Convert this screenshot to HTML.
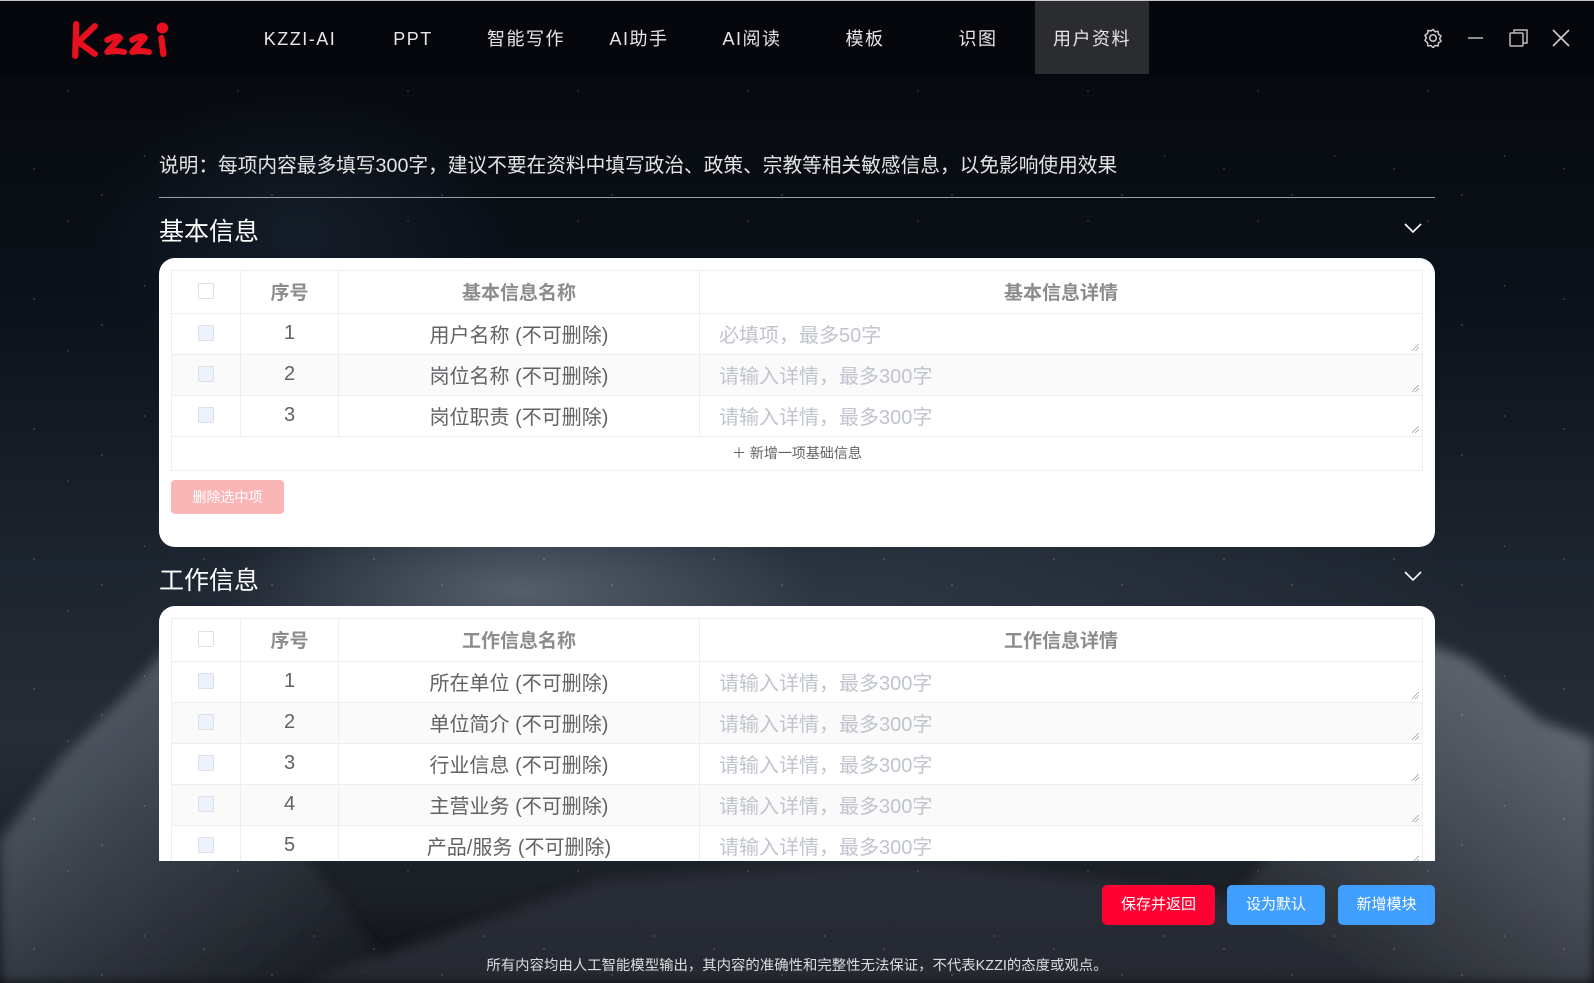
<!DOCTYPE html>
<html><head><meta charset="utf-8">
<style>
*{margin:0;padding:0;box-sizing:border-box}
html,body{width:1594px;height:983px;overflow:hidden}
body{position:relative;font-family:"Liberation Sans","Noto Sans CJK SC",sans-serif;
background:
radial-gradient(ellipse 420px 140px at 520px 590px,rgba(130,140,155,.5),transparent 70%),
radial-gradient(ellipse 300px 200px at 300px 230px,rgba(40,55,75,.35),transparent 70%),
radial-gradient(ellipse 900px 300px at 800px 620px,rgba(60,70,85,.55),transparent 75%),
linear-gradient(180deg,#05070c 0%,#0b1119 30%,#1d2530 58%,#262c35 75%,#1a1e25 92%,#0c0e12 100%);}
.stars{position:absolute;inset:0;pointer-events:none;
background-image:radial-gradient(1px 1px at 20% 30%,#fff8,transparent),radial-gradient(1px 1px at 60% 50%,#fff8,transparent),radial-gradient(1px 1px at 85% 20%,#fff6,transparent),radial-gradient(1px 1px at 40% 70%,#fff6,transparent);
background-size:170px 130px}
.top{position:absolute;left:0;top:0;width:1594px;height:75px;background:#05070c;border-top:1px solid #c8c8c8}
.nav{position:absolute;top:2px;height:75px;line-height:75px;color:#e6e6e6;font-size:18px;letter-spacing:1.5px;transform:translateX(-50%);white-space:nowrap}
.active{position:absolute;left:1035px;top:1px;width:114px;height:73px;background:#2b2c30}
.note{position:absolute;left:159px;top:149px;color:#e4e4e4;font-size:19.7px;white-space:nowrap}
.hr{position:absolute;left:159px;top:197px;width:1276px;height:1px;background:#9aa0a8}
.sec{position:absolute;left:159px;color:#fff;font-size:25px}
.chev{position:absolute;left:1404px;width:18px;height:12px}
.card{position:absolute;left:159px;width:1276px;background:#fff;border-radius:16px;overflow:hidden}
table{position:absolute;left:12px;border-collapse:collapse;width:1252px;table-layout:fixed}
td,th{border:1px solid #ebeef5;text-align:center;height:41px;color:#606266;font-size:20px;font-weight:normal;padding-bottom:2px}
th{height:43px;color:#8c8c8c;font-weight:bold;font-size:19px}
tr.s td{background:#fafafa}
td.d{text-align:left;padding-left:19px;color:#c0c4cc;position:relative}
td.d:after{content:"";position:absolute;right:3px;bottom:3px;width:7px;height:7px;background:linear-gradient(135deg,transparent 45%,#999 46%,#999 52%,transparent 53%,transparent 70%,#999 71%,#999 77%,transparent 78%)}
.cb{display:inline-block;width:16px;height:16px;border:1px solid #dcdfe6;border-radius:2px;background:#edf2fc;vertical-align:middle}
th .cb{background:#fff}
.add td{height:34px;font-size:14px;color:#606266}
.btn{position:absolute;top:885px;height:40px;line-height:40px;color:#fff;font-size:15px;text-align:center;border-radius:5px}
.foot{position:absolute;left:0;width:1594px;top:954px;text-align:center;color:#ddd;font-size:14.4px}
</style></head><body>
<svg style="position:absolute;left:0;top:0" width="1594" height="983">
<defs>
<linearGradient id="ml" x1="0" y1="0" x2="1" y2="1"><stop offset="0" stop-color="#6b7480"/><stop offset=".5" stop-color="#3a414b"/><stop offset="1" stop-color="#15181d"/></linearGradient>
<linearGradient id="mr" x1="1" y1="0" x2="0" y2="1"><stop offset="0" stop-color="#7a818b"/><stop offset=".5" stop-color="#444a53"/><stop offset="1" stop-color="#16191e"/></linearGradient>
<filter id="b"><feGaussianBlur stdDeviation="6"/></filter>
</defs>
<g filter="url(#b)" opacity=".85">
<path d="M0 840 L60 760 L120 700 L165 650 L200 700 L260 800 L340 900 L400 983 L0 983Z" fill="url(#ml)"/>
<path d="M1380 720 L1420 640 L1470 660 L1540 720 L1594 740 L1594 983 L1150 983 L1250 880Z" fill="url(#mr)"/>
<path d="M300 983 L600 880 L900 860 L1200 890 L1400 983Z" fill="#2a2f37"/>
</g>
</svg>
<div class="stars"></div>
<div class="top"></div>
<svg style="position:absolute;left:70px;top:18px" width="110" height="44" viewBox="0 0 106 44" preserveAspectRatio="none" fill="none" stroke="#e8101e" stroke-width="6" stroke-linecap="round" stroke-linejoin="round">
<path d="M6 6 L5 38 M24 8 L8 24 L24 36"/>
<path d="M36 22 Q46 16 48 20 L36 34 Q44 32 52 34"/>
<path d="M60 22 Q70 16 72 20 L60 34 Q68 32 76 34"/>
<path d="M88 20 L90 36"/><circle cx="89" cy="10" r="2.5" fill="#e8101e"/>
</svg>
<div class="active"></div>
<div class="nav" style="left:300px">KZZI-AI</div>
<div class="nav" style="left:413px">PPT</div>
<div class="nav" style="left:526px">智能写作</div>
<div class="nav" style="left:639px">AI助手</div>
<div class="nav" style="left:752px">AI阅读</div>
<div class="nav" style="left:865px">模板</div>
<div class="nav" style="left:978px">识图</div>
<div class="nav" style="left:1092px">用户资料</div>
<svg style="position:absolute;left:1423px;top:28px" width="20" height="20" viewBox="0 0 20 20" fill="none" stroke="#ccc" stroke-width="1.5"><path d="M10 1.5l2 2.2 3-.4.5 3 2.5 1.7-1.4 2.6 1.4 2.6-2.5 1.7-.5 3-3-.4-2 2.2-2-2.2-3 .4-.5-3L2 12.4 3.4 9.8 2 7.2 4.5 5.5l.5-3 3 .4z"/><circle cx="10" cy="10" r="3.3"/></svg>
<svg style="position:absolute;left:1467px;top:28px" width="18" height="20"><path d="M1 10h15" stroke="#bbb" stroke-width="1.5"/></svg>
<svg style="position:absolute;left:1509px;top:28px" width="20" height="20" fill="none" stroke="#bbb" stroke-width="1.5"><rect x="1" y="5" width="13" height="13" rx="1"/><path d="M5 5V2h13v13h-4"/></svg>
<svg style="position:absolute;left:1552px;top:29px" width="18" height="18" stroke="#ccc" stroke-width="1.6"><path d="M1 1l16 16M17 1L1 17"/></svg>

<div class="note">说明：每项内容最多填写300字，建议不要在资料中填写政治、政策、宗教等相关敏感信息，以免影响使用效果</div>
<div class="hr"></div>
<div class="sec" style="top:212px">基本信息</div>
<svg class="chev" style="top:222px" viewBox="0 0 18 12"><path d="M1 2l8 8 8-8" fill="none" stroke="#fff" stroke-width="1.6"/></svg>
<div class="card" style="top:258px;height:289px">
<table style="top:12px">
<colgroup><col style="width:69px"><col style="width:98px"><col style="width:361px"><col></colgroup>
<tr><th><span class="cb"></span></th><th>序号</th><th>基本信息名称</th><th>基本信息详情</th></tr>
<tr><td><span class="cb"></span></td><td>1</td><td>用户名称 (不可删除)</td><td class="d">必填项，最多50字</td></tr>
<tr class="s"><td><span class="cb"></span></td><td>2</td><td>岗位名称 (不可删除)</td><td class="d">请输入详情，最多300字</td></tr>
<tr><td><span class="cb"></span></td><td>3</td><td>岗位职责 (不可删除)</td><td class="d">请输入详情，最多300字</td></tr>
<tr class="add"><td colspan="4">＋ 新增一项基础信息</td></tr>
</table>
<div style="position:absolute;left:12px;top:222px;width:113px;height:34px;line-height:34px;background:#fab6b6;color:#fff;font-size:14px;text-align:center;border-radius:4px">删除选中项</div>
</div>

<div class="sec" style="top:561px">工作信息</div>
<svg class="chev" style="top:570px" viewBox="0 0 18 12"><path d="M1 2l8 8 8-8" fill="none" stroke="#fff" stroke-width="1.6"/></svg>
<div class="card" style="top:606px;height:255px;border-radius:16px 16px 0 0">
<table style="top:12px">
<colgroup><col style="width:69px"><col style="width:98px"><col style="width:361px"><col></colgroup>
<tr><th><span class="cb"></span></th><th>序号</th><th>工作信息名称</th><th>工作信息详情</th></tr>
<tr><td><span class="cb"></span></td><td>1</td><td>所在单位 (不可删除)</td><td class="d">请输入详情，最多300字</td></tr>
<tr class="s"><td><span class="cb"></span></td><td>2</td><td>单位简介 (不可删除)</td><td class="d">请输入详情，最多300字</td></tr>
<tr><td><span class="cb"></span></td><td>3</td><td>行业信息 (不可删除)</td><td class="d">请输入详情，最多300字</td></tr>
<tr class="s"><td><span class="cb"></span></td><td>4</td><td>主营业务 (不可删除)</td><td class="d">请输入详情，最多300字</td></tr>
<tr><td><span class="cb"></span></td><td>5</td><td>产品/服务 (不可删除)</td><td class="d">请输入详情，最多300字</td></tr>
</table>
</div>

<div class="btn" style="left:1102px;width:113px;background:#ff0033">保存并返回</div>
<div class="btn" style="left:1227px;width:98px;background:#409eff">设为默认</div>
<div class="btn" style="left:1338px;width:97px;background:#409eff">新增模块</div>
<div class="foot">所有内容均由人工智能模型输出，其内容的准确性和完整性无法保证，不代表KZZI的态度或观点。</div>
</body></html>
